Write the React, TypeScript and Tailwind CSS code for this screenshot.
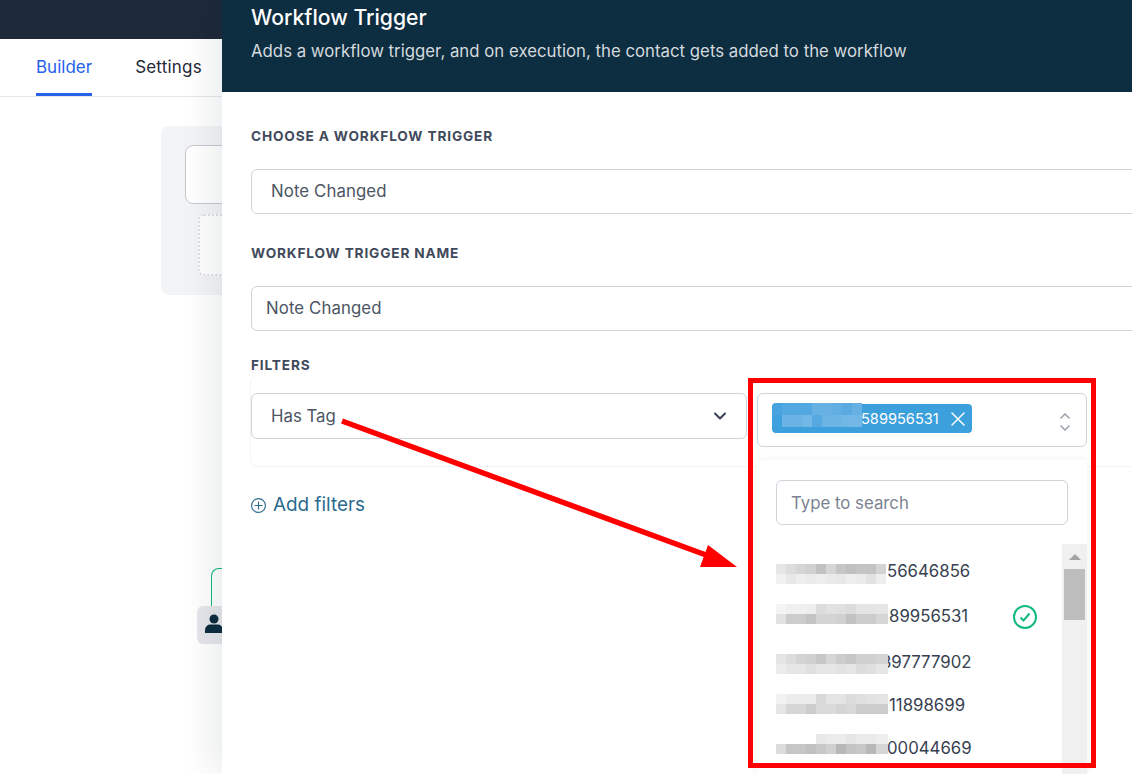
import { ChevronDown, X } from "lucide-react";

// gray values of the blurred part of each tag, two rows of 11 squares
const TAG_ROWS = [
  {
    text: "56646856",
    rowClass: "h-[46px] pl-[111px]",
    textClass: "pt-[2px]",
    blurClass: "top-[16px] w-[110px]",
    top: [230, 221, 213, 208, 194, 214, 198, 192, 196, 196, 212],
    bottom: [240, 232, 238, 234, 238, 234, 232, 238, 234, 226, 238],
  },
  {
    text: "89956531",
    rowClass: "h-[45px] pl-[113px]",
    textClass: "pt-0",
    blurClass: "top-[10px] w-[112px]",
    top: [244, 240, 240, 238, 220, 226, 224, 220, 228, 228, 230],
    bottom: [226, 204, 204, 196, 212, 212, 208, 194, 204, 204, 214],
    checked: true,
  },
  {
    text: "397777902",
    rowClass: "h-[46px] pl-[105px]",
    textClass: "pt-[2px]",
    blurClass: "top-[15px] w-[112px]",
    top: [228, 220, 212, 208, 198, 214, 204, 198, 208, 208, 212],
    bottom: [236, 230, 230, 224, 230, 230, 226, 230, 220, 224, 230],
  },
  {
    text: "11898699",
    rowClass: "h-[40px] pl-[113px]",
    textClass: "pt-[2px]",
    blurClass: "top-[9px] w-[112px]",
    top: [242, 236, 236, 236, 216, 228, 228, 220, 224, 226, 228],
    bottom: [230, 214, 214, 204, 218, 218, 212, 216, 204, 204, 204],
  },
  {
    text: "00044669",
    rowClass: "h-[46px] pl-[111px]",
    textClass: "pt-[2px]",
    blurClass: "top-[9px] w-[112px]",
    top: [255, 255, 255, 255, 232, 236, 236, 230, 234, 234, 238],
    bottom: [220, 198, 198, 192, 200, 208, 184, 196, 200, 184, 214],
  },
];

const CHIP_BLUR = [
  ["#46a3df", "#52a8e0", "#52a8e0", "#52a8e0", "#68b2e3", "#68b2e3", "#60aee2", "#5aaae1", "#66b0e3"],
  ["#3fa0de", "#6ab3e4", "#6ab3e4", "#72b7e5", "#56a9e1", "#6cb4e4", "#6cb4e4", "#72b7e5", "#72b7e5"],
];

function Blur({ row, className }: { row: any; className: string }) {
  return (
    <div className={`absolute left-0 overflow-hidden ${className}`}>
      {[row.top, row.bottom].map((cells: number[], i: number) => (
        <div key={i} className="flex h-[10px]">
          {[...cells, cells[10]].map((g, j) => (
            <div key={j} className="h-[10px] w-[10px] shrink-0" style={{ background: `rgb(${g},${g},${g})` }} />
          ))}
        </div>
      ))}
    </div>
  );
}

function SectionLabel({ children, className = "" }: { children: string; className?: string }) {
  return <p className={`text-[13.650px] leading-5 font-bold tracking-[0.85px] text-[#3f4a5c] uppercase ${className}`}>{children}</p>;
}

export default function App() {
  return (
    <div className="relative h-[774px] w-[1132px] overflow-hidden bg-white font-['Inter',sans-serif]">
      {/* top bar and tabs */}
      <div className="h-[39px] bg-[#1e293b]" />
      <div className="flex h-[58px] gap-[43px] border-b border-[#e5e7eb] pl-[36px]">
        <div className="h-[57px] border-b-[3px] border-[#2563eb] pt-[16px] text-[17px] leading-6 text-[#2563eb]">Builder</div>
        <div className="pt-[16px] text-[17px] leading-6 tracking-[0.2px] text-[#1f2937]">Settings</div>
      </div>

      {/* workflow canvas, mostly behind the drawer */}
      <div className="absolute top-[126px] left-[161px] h-[169px] w-[200px] rounded-lg bg-[#f3f4f6]">
        <div className="absolute top-[19px] left-[24px] h-[59px] w-[150px] rounded-lg border border-[#c4c8cf] bg-white" />
        <div className="absolute top-[88px] left-[37px] h-[62px] w-[150px] rounded-md border-2 border-dotted border-[#dddfe3] bg-white" />
      </div>
      <div className="absolute top-[568px] left-[211px] h-[38px] w-[40px] rounded-tl-lg border-t border-l border-[#10b981]" />
      <div className="absolute top-[606px] left-[197px] flex h-[38px] w-[50px] rounded-md bg-[#e5e7eb] pt-[8px] pl-[8px]">
        <svg width="18" height="20" viewBox="0 0 18 20" fill="#0d2d40">
          <circle cx="9" cy="5" r="4.5" />
          <path d="M0 19v-3c0-3.5 3-5.500 5.500-5.500h7c2.500 0 5.500 2 5.500 5.500v3z" />
        </svg>
      </div>

      {/* drawer */}
      <div className="absolute top-0 left-[222px] h-[774px] w-[1000px] bg-white shadow-[-12px_0_30px_rgba(15,23,42,0.08)]">
        <div className="h-[92px] bg-[#0d2d40] pt-[3px] pl-[29px]">
          <h1 className="text-[21.200px] leading-7 font-medium text-white">Workflow Trigger</h1>
          <p className="mt-[8px] text-[16.800px] leading-6 text-[#d4dade]">Adds a workflow trigger, and on execution, the contact gets added to the workflow</p>
        </div>

        <div className="px-[29px] pt-[34px]">
          <SectionLabel className="mb-[23px]">Choose a workflow trigger</SectionLabel>
          <div className="flex h-[45px] items-center rounded-md border border-[#d1d3db] pl-[19px] text-[16.800px] tracking-[0.1px] text-[#4b5563]">Note Changed</div>

          <SectionLabel className="mt-[29px] mb-[23px]">Workflow trigger name</SectionLabel>
          <div className="flex h-[45px] items-center rounded-md border border-[#d1d3db] pl-[14px] text-[16.800px] tracking-[0.1px] text-[#4b5563]">Note Changed</div>

          <SectionLabel className="mt-[24px]">Filters</SectionLabel>
          <div className="-mx-px flex items-start gap-[10px] rounded-lg border border-t-0 border-[#f3f4f6] pt-[18px] pb-[19px]">
            <div className="flex h-[46px] w-[496px] items-center justify-between rounded-md border border-[#d1d3db] pr-[16px] pl-[19px] text-[16.800px] text-[#4b5563]">
              <span className="pt-[2px]">Has Tag</span>
              <ChevronDown size={20} strokeWidth={2.5} className="text-[#374151]" />
            </div>

            <div className="relative w-[330px]">
              <div className="flex h-[54px] items-start justify-between rounded-md border border-[#d1d3db] pt-[10px] pr-[15px] pl-[14px]">
                <div className="relative flex h-[29px] w-[200px] items-center justify-between rounded bg-[#3ca0dd] pr-[2px] pl-[89px] text-[14.600px] text-white">
                  <div className="absolute top-[-1px] left-0 overflow-hidden rounded-l">
                    {CHIP_BLUR.map((cells, i) => (
                      <div key={i} className="flex h-[12px]">
                        {cells.map((c, j) => (
                          <div key={j} className="h-[12px] w-[10px]" style={{ background: c }} />
                        ))}
                      </div>
                    ))}
                  </div>
                  <span className="pt-[2px]">589956531</span>
                  <X size={24} strokeWidth={1.5} />
                </div>
                <svg width="12" height="18" viewBox="0 0 12 18" fill="none" stroke="#9ca3af" strokeWidth="1.5" className="mt-[9px]">
                  <path d="M1.500 5.500L6 1l4.500 4.500M1.500 12.500L6 17l4.500-4.500" />
                </svg>
              </div>

              {/* open dropdown */}
              <div className="absolute top-[67px] left-0 h-[330px] w-[330px] bg-white shadow-[0_0_8px_rgba(0,0,0,0.06)]">
                <div className="mx-[19px] mt-[20px] flex h-[45px] items-center rounded-md border border-[#d1d3db] pt-[2px] pl-[14px] text-[16.800px] text-[#7b8391]">Type to search</div>
                <div className="mt-[19px] flex">
                  <div className="flex-1 pt-[4px] pl-[19px]">
                    {TAG_ROWS.map(row => (
                      <div key={row.text} className={`relative flex items-center text-[16.800px] text-[#374151] ${row.rowClass}`}>
                        <span className={row.textClass}>{row.text}</span>
                        <Blur row={row} className={row.blurClass} />
                        {row.checked && (
                          <svg width="24" height="24" viewBox="0 0 24 24" fill="none" stroke="#10b981" strokeWidth="2" className="ml-[45px]">
                            <circle cx="12" cy="12" r="11" />
                            <path d="M7.500 12.500l3 3 6-7" />
                          </svg>
                        )}
                      </div>
                    ))}
                  </div>
                  <div className="h-[240px] w-[25px] bg-[#f0f0f0] px-[2px] pt-[10px]">
                    <div className="mx-auto h-0 w-0 border-x-[6px] border-b-[6px] border-x-transparent border-b-[#a3a3a3]" />
                    <div className="mt-[9px] h-[51px] w-[21px] bg-[#bdbdbd]" />
                  </div>
                </div>
              </div>
            </div>
          </div>

          <div className="mt-[26px] flex h-6 items-center gap-[7px] text-[18.900px] text-[#2b6a8f]">
            <svg width="15" height="15" viewBox="0 0 15 15" fill="none" stroke="#2b6a8f" strokeWidth="1.1">
              <circle cx="7.500" cy="7.500" r="6.900" />
              <path d="M7.500 3.500v8M3.500 7.500h8" />
            </svg>
            Add filters
          </div>
        </div>
      </div>

      {/* red annotation drawn on top of the screenshot */}
      <div className="pointer-events-none absolute top-[378px] left-[748px] h-[390px] w-[348px] border-[5px] border-[#ff0000]" />
      <svg width="1132" height="774" className="pointer-events-none absolute top-0 left-0">
        <path d="M342 421L706 555" stroke="#ff0000" strokeWidth="5.500" />
        <path d="M737 567L708 545L700 567Z" fill="#ff0000" />
      </svg>
    </div>
  );
}
